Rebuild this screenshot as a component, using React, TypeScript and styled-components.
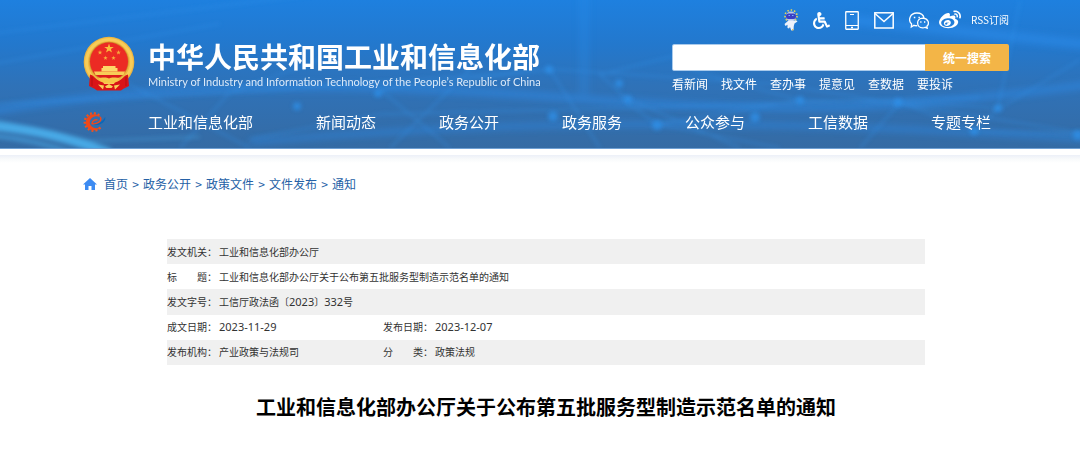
import React from "react";
import styled, { createGlobalStyle } from "styled-components";
import { FaWheelchair, FaWeibo } from "react-icons/fa";

const GlobalStyle = createGlobalStyle`
  * { box-sizing: border-box; }
  body {
    margin: 0;
    background: #fff;
    font-family: "Noto Sans CJK SC", "Noto Sans", sans-serif;
  }
  a { color: inherit; text-decoration: none; }
`;

const Header = styled.header`
  position: relative;
  overflow: hidden;
  background: linear-gradient(180deg, #1e80df 0%, #2378cd 30%, #2f72b8 58%, #356ba4 100%);
  border-bottom: 1px solid #6fa0d4;
`;

const Backdrop = styled.svg`
  position: absolute;
  inset: 0;
  width: 100%;
  height: 100%;
`;

const HeaderInner = styled.div`
  position: relative;
  padding: 8px 71px 14px 83px;
  color: #fff;
`;

const TopRow = styled.div`
  display: flex;
  justify-content: space-between;
`;

const Brand = styled.a`
  display: flex;
  gap: 13px;
  margin-top: 28px;
`;

const BrandText = styled.div`
  display: flex;
  flex-direction: column;
  padding-top: 3px;
`;

const BrandName = styled.span`
  font-size: 28px;
  line-height: 34px;
  font-weight: 700;
`;

const BrandSub = styled.span`
  font-family: Lato, "Noto Sans", sans-serif;
  font-size: 11px;
  line-height: 17px;
  color: #dceaf9;
`;

const Tools = styled.div`
  width: 337px;
`;

const IconBar = styled.div`
  display: flex;
  align-items: center;
  justify-content: flex-end;
  height: 24px;
  gap: 15px;
`;

const IconLink = styled.a`
  display: flex;
`;

const Social = styled.div`
  display: flex;
  align-items: center;
  gap: 10px;
`;

const RssLink = styled.a`
  font-size: 10px;
  line-height: 24px;
`;

const SearchForm = styled.form`
  display: flex;
  height: 27px;
  margin-top: 12px;
  border-radius: 2px;
  overflow: hidden;
`;

const SearchInput = styled.input`
  flex: 1;
  min-width: 0;
  border: 1px solid #a9caeb;
  border-right: 0;
  border-radius: 2px 0 0 2px;
  background: #fff;
  padding: 0 8px;
`;

const SearchButton = styled.button`
  width: 84px;
  border: 0;
  padding: 0;
  background: #f3b547;
  color: #fff;
  font: 700 12px/26px "Noto Sans CJK SC", sans-serif;
`;

const QuickLinks = styled.div`
  display: flex;
  gap: 13px;
  margin-top: 4px;
  font-size: 12px;
  line-height: 18px;
`;

const Nav = styled.nav`
  display: flex;
  align-items: center;
  margin-top: 17px;
  height: 24px;
`;

const PartyLink = styled.a`
  display: flex;
  width: 65px;
`;

const NavList = styled.div`
  display: flex;
  gap: 63px;
  font-size: 15px;
  line-height: 24px;
  white-space: nowrap;
`;

const Strip = styled.div`
  height: 11px;
  margin-top: 6px;
  background: linear-gradient(180deg, #ecf0f8 0, #f8fafb 4px, #fff 8px);
`;

const Main = styled.main`
  padding: 8px 71px 40px 83px;
`;

const Crumbs = styled.nav`
  display: flex;
  align-items: center;
  font-size: 12px;
  line-height: 20px;
  color: #2561a6;
`;

const HomeIcon = styled.svg`
  width: 14px;
  height: 12px;
  margin-right: 7px;
`;

const Divider = styled.span`
  width: 15px;
  text-align: center;
`;

const Article = styled.article`
  margin: 45px 84px 0;
`;

const InfoTable = styled.table`
  width: 100%;
  height: 126px;
  border-collapse: collapse;
  table-layout: fixed;
  font-size: 10px;
  line-height: 24px;
  color: #333;
  tr:nth-child(odd) { background: #f0f0f0; }
`;

const Column = styled.col<{ $kind: "label" | "value" | "rest" }>`
  width: ${(p) => ({ label: "52px", value: "164px", rest: "auto" })[p.$kind]};
`;

const Label = styled.th`
  padding: 0;
  font-weight: 400;
  text-align: left;
  white-space: nowrap;
`;

const Value = styled.td`
  padding: 0;
`;

const Digits = styled.span`
  font-family: "Noto Sans", sans-serif;
  font-size: 11px;
`;

const Title = styled.h1`
  margin: 26px 0 0;
  text-align: center;
  font-size: 20px;
  line-height: 32px;
  font-weight: 700;
  color: #000;
`;

const star = (cx: number, cy: number, r: number) =>
  Array.from({ length: 10 }, (_, i) => {
    const a = -Math.PI / 2 + (i * Math.PI) / 5;
    const q = i % 2 ? r * 0.4 : r;
    return `${(cx + q * Math.cos(a)).toFixed(2)},${(cy + q * Math.sin(a)).toFixed(2)}`;
  }).join(" ");

const NationalEmblem = () => (
  <svg width="52" height="55" viewBox="0 0 52 55" aria-hidden="true">
    <circle cx="26" cy="26" r="25.3" fill="#efb640" />
    <circle cx="26" cy="26" r="22.500" fill="none" stroke="#f8cc58" strokeWidth="3" />
    <circle cx="26" cy="25.500" r="19.800" fill="#cf8f2c" />
    <circle cx="26" cy="25.500" r="19" fill="#ec2b24" />
    <polygon points={star(26, 12.5, 5)} fill="#fbbf3c" />
    <polygon points={star(17, 16.5, 2.5)} fill="#f8a93c" />
    <polygon points={star(35.5, 16.5, 2.5)} fill="#f8a93c" />
    <polygon points={star(22.5, 22, 2.3)} fill="#f8b03c" />
    <polygon points={star(30.5, 22, 2.3)} fill="#f8b03c" />
    <path d="M20 30h12.500v2h2v3.500H18.500V32H20z" fill="#fdd768" />
    <path d="M11 35.500h31L40.500 39H12.500z" fill="#f8cd57" />
    <path d="M14 39h25l-5 4.500H19z" fill="#dc1c1c" />
    <path d="M15 41.500c4 1 7-1 11 1c4-2 7 0 11-1l-4 5.500H19z" fill="#f7c648" />
    <path d="M7 38.500C11 39 12 44 20 46.500L22 49L18 54L12 53L6 50Z" fill="#d91417" />
    <path d="M45 38.500C41 39 40 44 32 46.500L30 49L34 54L40 53L46 50Z" fill="#d91417" />
    <path d="M12 53L19 48H33L40 53L38 54.500H14Z" fill="#d91417" />
    <path d="M15 48.500L21 49.500L20 53.500ZM37 48.500L31 49.500L32 53.500ZM22 50.500L26 48L30 50.500L28.500 52H23.500Z" fill="#f9cf58" />
    <path d="M9 41V50M43 41V50" stroke="#a90d12" strokeWidth="0.800" />
  </svg>
);

const TEETH = [45, 71, 97, 123, 149, 175, 201, 227, 253, 279, 305];

const GearLogo = () => (
  <svg width="24" height="22" viewBox="0 0 24 22" aria-hidden="true">
    {TEETH.map((deg) => (
      <rect key={deg} x="18" y="10" width="2.400" height="2" fill="#f0521e" transform={`rotate(${deg} 10.5 11)`} />
    ))}
    <path
      d="M17.500 5.800C13.500 1.800 6.500 2.700 3.800 7.500C1 13 4.500 19.300 11 19.200C13.500 19.200 15.500 18.500 17 17C12 18.200 7 16 6.800 11.500C6.700 7 11.500 3.800 17.500 5.800Z"
      fill="#f0481a"
    />
    <path d="M17.300 5.800C18.800 8.500 17 11 14 12.200C12 13 10 13 9 12.500C9.500 9.500 12 8.200 14.500 9" fill="none" stroke="#f0481a" strokeWidth="1.400" />
    <path d="M22.300 6C23 11 17.500 14.500 10.500 14C16 12.800 19.500 10.500 22.300 6Z" fill="#0768bb" />
  </svg>
);

const Mascot = () => (
  <svg width="14" height="22" viewBox="0 0 14 22" aria-hidden="true">
    <circle cx="7" cy="7" r="6" fill="none" stroke="#e8d25a" strokeWidth="1.600" strokeDasharray="1.500 1.900" />
    <circle cx="7" cy="7.500" r="5" fill="#b9c8ea" />
    <rect x="2" y="4.500" width="10" height="5.500" rx="2.500" fill="#3a3fc4" />
    <path d="M4.500 6.500h1.500M8 6.500h1.500" stroke="#75b6ff" />
    <path d="M4.500 11.500L.5 15l1 2l2-1.200L3.500 19l1.500.5l1-1.500l1.200 3.500l2.300-.5l.3-4l.7-2.500L13.500 12.500l-1.200-1z" fill="#eef2fb" />
    <path d="M8 20.800h1.500" stroke="#e7c35c" strokeWidth="1.500" />
  </svg>
);

const PhoneIcon = () => (
  <svg width="14" height="19" viewBox="0 0 14 19" fill="none" stroke="#fff" aria-hidden="true">
    <rect x="0.750" y="0.750" width="12.500" height="17.500" rx="0.500" strokeWidth="1.300" />
    <path d="M5 3.500h4M1 14.500h12" />
    <path d="M6 16.500h2" strokeWidth="1.300" />
  </svg>
);

const MailIcon = () => (
  <svg width="20" height="17" viewBox="0 0 20 17" fill="none" stroke="#fff" strokeWidth="1.500" aria-hidden="true">
    <rect x="0.800" y="0.800" width="18.400" height="15.200" />
    <path d="M1 1.500L10 9.500L19 1.500" />
  </svg>
);

const WechatIcon = () => (
  <svg width="20" height="17" viewBox="0 0 20 17" fill="none" stroke="#fff" strokeWidth="1.300" aria-hidden="true">
    <path d="M8.300 13.600C7 13.900 6 13.700 5 13.300L2.300 15L2.600 12C-1.300 8.500.8 1 7.900 1C12 1 14.500 3.500 15 6" />
    <path d="M13.700 6.100C6.800 6.300 7 15.900 13.700 15.900C14.700 15.900 15.500 15.700 16.200 15.300L18.200 16.200L17.900 14.300C21.200 11.200 18.700 6.100 13.700 6.100Z" />
    <path d="M4.800 5.500h1.500M9.400 5.500h1.500M11.200 10h1.300M15 10h1.300" strokeWidth="1.600" />
  </svg>
);

const HeaderBackdrop = () => (
  <Backdrop viewBox="0 0 1080 149" preserveAspectRatio="none" aria-hidden="true">
    <defs>
      <filter id="soft" x="-10%" y="-10%" width="120%" height="120%">
        <feGaussianBlur stdDeviation="2" />
      </filter>
      <filter id="glow" x="-20%" y="-50%" width="140%" height="200%">
        <feGaussianBlur stdDeviation="4" />
      </filter>
    </defs>
    <g fill="none" stroke="#2d90f0" filter="url(#glow)" opacity="0.5">
      <path d="M-10 112C150 85 330 80 560 98S900 110 1090 85" strokeWidth="7" />
      <path d="M584 -10V95" strokeWidth="7" opacity="0.7" />
      <path d="M250 143C450 125 700 115 1090 140" strokeWidth="5" />
      <path d="M850 20L1090 45" strokeWidth="10" />
    </g>
    <g fill="none" stroke="#3596ee" strokeWidth="1.500" filter="url(#soft)" opacity="0.5">
      <path d="M-10 34L130 17L350 -10M-10 65L220 24M-10 105L250 92L555 70L780 85L1090 135" />
      <path d="M390 149L470 70L410 45M450 149L380 90L550 70L600 149M740 149L625 98L600 75L720 45" />
      <path d="M620 98L657 125L780 149M657 125L800 101L900 103L1000 109L1080 60" />
      <path d="M800 101L690 70M900 103L860 149M998 109L1020 0M998 109L975 132L1080 135M975 132L900 103" />
      <path d="M180 149L230 93L320 60M120 80L250 149M250 140L380 115L657 108L980 98" />
    </g>
    <g fill="#2f91ea" filter="url(#soft)" opacity="0.75">
      <circle cx="297" cy="107" r="4" /><circle cx="378" cy="94" r="4" /><circle cx="549" cy="70" r="4" />
      <circle cx="553" cy="117" r="5" /><circle cx="619" cy="84" r="4" /><circle cx="628" cy="100" r="4" />
      <circle cx="657" cy="126" r="5" /><circle cx="755" cy="118" r="5" /><circle cx="800" cy="101" r="4" />
      <circle cx="898" cy="103" r="4" /><circle cx="998" cy="109" r="4" /><circle cx="974" cy="132" r="4" />
      <circle cx="1078" cy="136" r="5" />
    </g>
    <g fill="none" stroke="#4db8f5" filter="url(#soft)">
      <path d="M-5 127C35 131 68 139 110 154" strokeWidth="9" opacity="0.8" />
      <path d="M-5 137C25 140 50 146 75 155" strokeWidth="4" opacity="0.5" />
      <path d="M-5 121L90 142L200 138" strokeWidth="2" opacity="0.4" />
    </g>
  </Backdrop>
);

const quickLinks = ["看新闻", "找文件", "查办事", "提意见", "查数据", "要投诉"];
const navItems = ["工业和信息化部", "新闻动态", "政务公开", "政务服务", "公众参与", "工信数据", "专题专栏"];
const crumbs = ["首页", "政务公开", "政策文件", "文件发布", "通知"];

export default function App() {
  return (
    <>
      <GlobalStyle />
      <Header>
        <HeaderBackdrop />
        <HeaderInner>
          <TopRow>
            <Brand href="#">
              <NationalEmblem />
              <BrandText>
                <BrandName>中华人民共和国工业和信息化部</BrandName>
                <BrandSub lang="en">
                  Ministry of Industry and Information Technology of the People’s Republic of China
                </BrandSub>
              </BrandText>
            </Brand>
            <Tools>
              <IconBar>
                <IconLink href="#" aria-label="智能问答"><Mascot /></IconLink>
                <IconLink href="#" aria-label="无障碍"><FaWheelchair size={17} /></IconLink>
                <IconLink href="#" aria-label="手机版"><PhoneIcon /></IconLink>
                <IconLink href="#" aria-label="邮箱"><MailIcon /></IconLink>
                <Social>
                  <IconLink href="#" aria-label="微信"><WechatIcon /></IconLink>
                  <IconLink href="#" aria-label="微博"><FaWeibo size={22} /></IconLink>
                  <RssLink href="#">RSS订阅</RssLink>
                </Social>
              </IconBar>
              <SearchForm onSubmit={(e) => e.preventDefault()}>
                <SearchInput type="text" aria-label="搜索" />
                <SearchButton type="submit">统一搜索</SearchButton>
              </SearchForm>
              <QuickLinks>
                {quickLinks.map((t) => <a href="#" key={t}>{t}</a>)}
              </QuickLinks>
            </Tools>
          </TopRow>
          <Nav>
            <PartyLink href="#" aria-label="工信部"><GearLogo /></PartyLink>
            <NavList>
              {navItems.map((t) => <a href="#" key={t}>{t}</a>)}
            </NavList>
          </Nav>
        </HeaderInner>
      </Header>
      <Strip />
      <Main>
        <Crumbs>
          <HomeIcon viewBox="0 0 14 12" aria-hidden="true">
            <path d="M7 0L14 6.500H12V12H8.500V8H5.500V12H2V6.500H0Z" fill="#3d8bf2" />
          </HomeIcon>
          {crumbs.map((t, i) => (
            <React.Fragment key={t}>
              {i > 0 && <Divider>&gt;</Divider>}
              <a href="#">{t}</a>
            </React.Fragment>
          ))}
        </Crumbs>
        <Article>
          <InfoTable>
            <colgroup>
              <Column $kind="label" />
              <Column $kind="value" />
              <Column $kind="label" />
              <Column $kind="rest" />
            </colgroup>
            <tbody>
              <tr><Label scope="row">发文机关：</Label><Value colSpan={3}>工业和信息化部办公厅</Value></tr>
              <tr><Label scope="row">标　　题：</Label><Value colSpan={3}>工业和信息化部办公厅关于公布第五批服务型制造示范名单的通知</Value></tr>
              <tr>
                <Label scope="row">发文字号：</Label>
                <Value colSpan={3}>工信厅政法函〔<Digits>2023</Digits>〕<Digits>332</Digits>号</Value>
              </tr>
              <tr>
                <Label scope="row">成文日期：</Label><Value><Digits>2023-11-29</Digits></Value>
                <Label scope="row">发布日期：</Label><Value><Digits>2023-12-07</Digits></Value>
              </tr>
              <tr>
                <Label scope="row">发布机构：</Label><Value>产业政策与法规司</Value>
                <Label scope="row">分　　类：</Label><Value>政策法规</Value>
              </tr>
            </tbody>
          </InfoTable>
          <Title>工业和信息化部办公厅关于公布第五批服务型制造示范名单的通知</Title>
        </Article>
      </Main>
    </>
  );
}
